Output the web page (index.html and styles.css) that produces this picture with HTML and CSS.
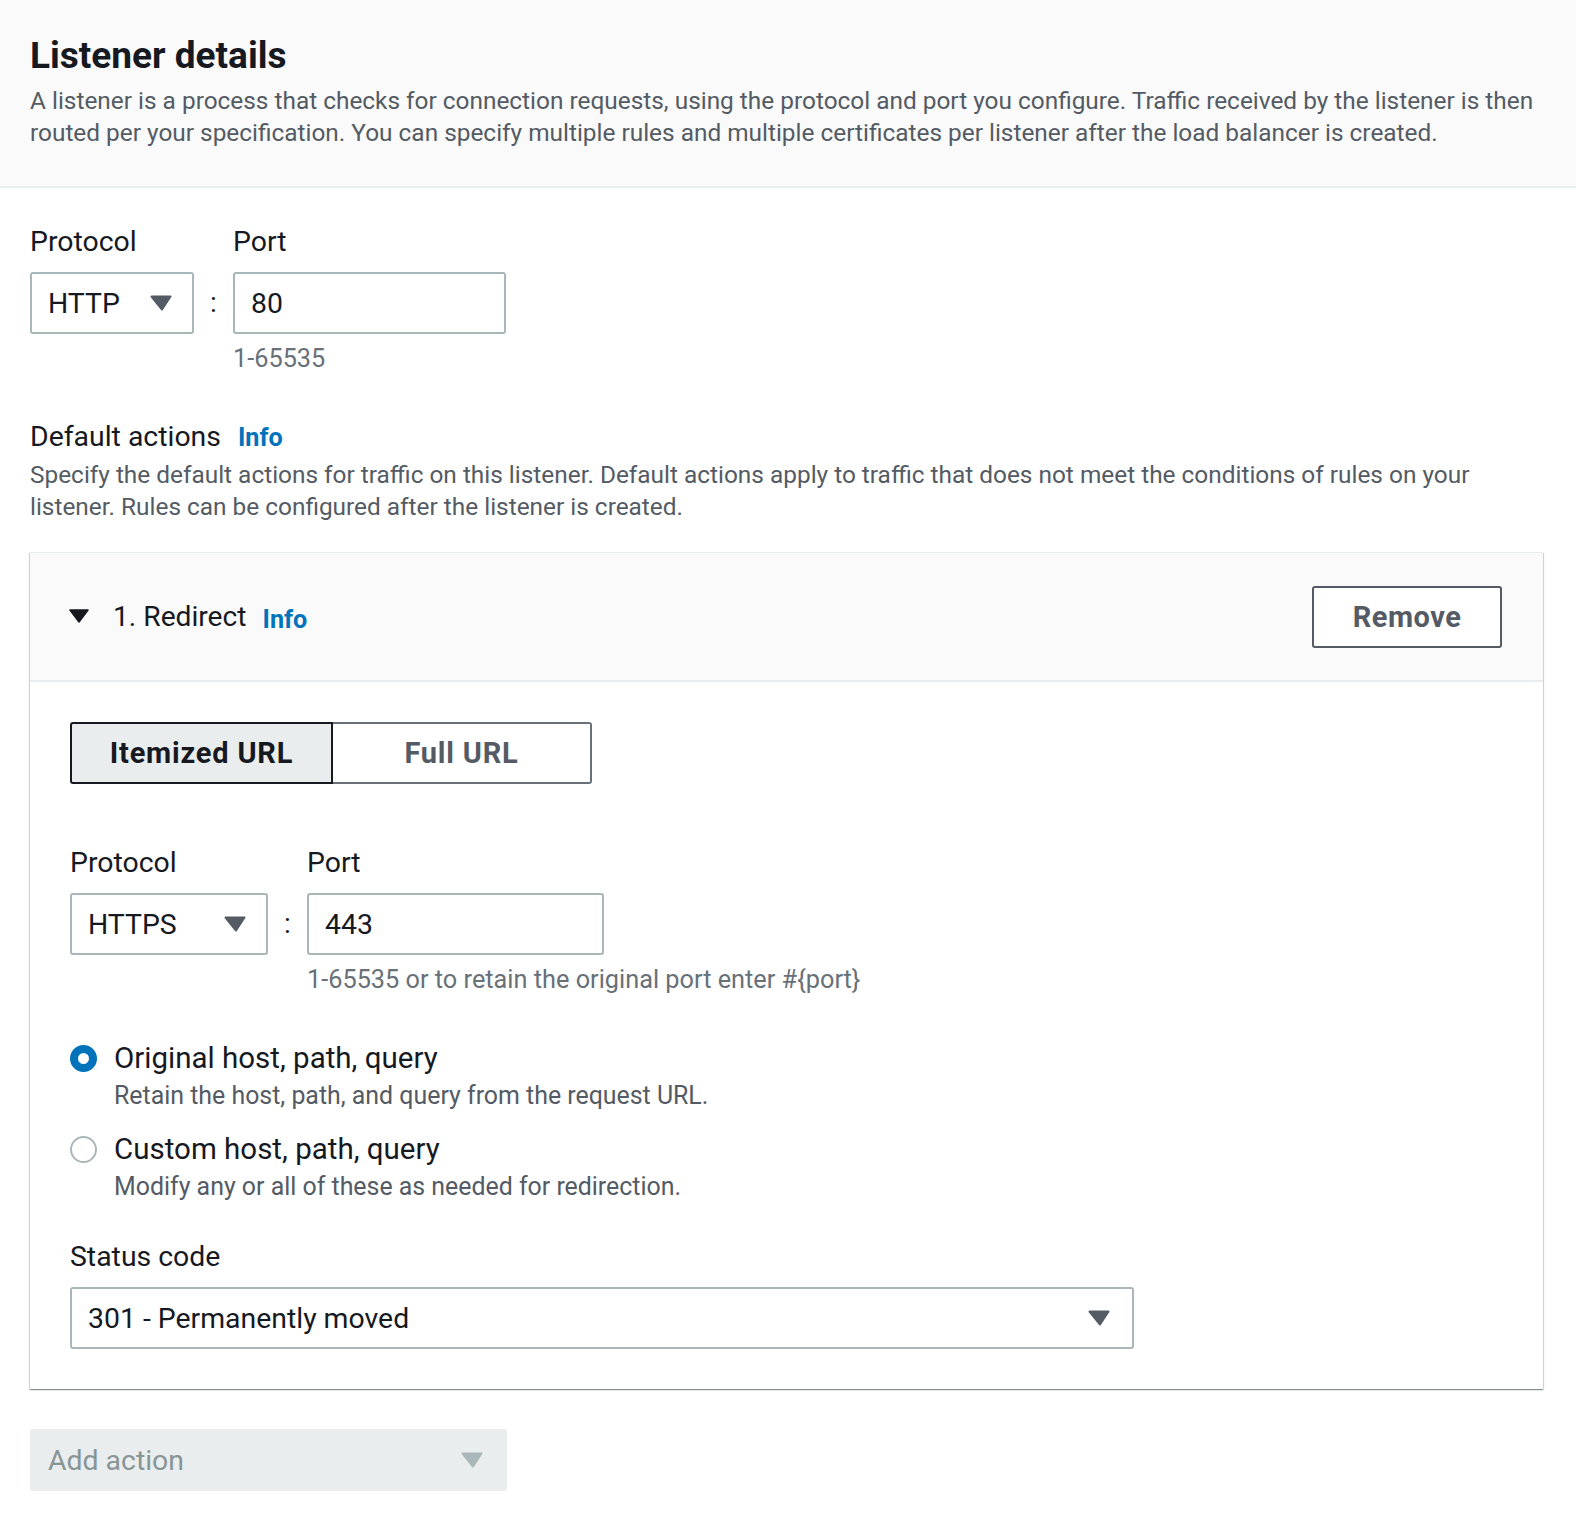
FILE: index.html
```html
<!DOCTYPE html>
<html lang="en">
<head>
<meta charset="utf-8">
<title>Listener details</title>
<link rel="stylesheet" href="styles.css">
</head>
<body>
<header class="page-header">
  <h1 class="title">Listener details</h1>
  <p class="header-desc">A listener is a process that checks for connection requests, using the protocol and port you configure. Traffic received by the listener is then routed per your specification. You can specify multiple rules and multiple certificates per listener after the load balancer is created.</p>
</header>

<main class="form">
  <div class="proto-port">
    <div class="field">
      <div class="label">Protocol</div>
      <div class="select select-http"><span class="select-text">HTTP</span><svg class="caret" viewBox="0 0 22 16"><path d="M1.5 1.5h19l-8.5 13z" fill="#545b64" stroke="#545b64" stroke-width="2" stroke-linejoin="round"/></svg></div>
    </div>
    <div class="colon">:</div>
    <div class="field">
      <div class="label">Port</div>
      <div class="input input-port">80</div>
      <div class="hint">1-65535</div>
    </div>
  </div>

  <div class="section-label">Default actions <a class="info">Info</a></div>
  <p class="section-desc">Specify the default actions for traffic on this listener. Default actions apply to traffic that does not meet the conditions of rules on your listener. Rules can be configured after the listener is created.</p>

  <section class="container">
    <div class="container-header">
      <div class="ch-title">
        <svg class="expand" viewBox="0 0 20 14"><path d="M1 1h18l-9 12z" fill="#16191f" stroke="#16191f" stroke-width="1.5" stroke-linejoin="round"/></svg>
        <span class="ch-text">1. Redirect</span>
        <a class="info info-lg">Info</a>
      </div>
      <button class="btn-remove">Remove</button>
    </div>
    <div class="container-body">
      <div class="segmented">
        <div class="seg seg-active">Itemized URL</div>
        <div class="seg seg-idle">Full URL</div>
      </div>

      <div class="proto-port proto-port-inner">
        <div class="field">
          <div class="label">Protocol</div>
          <div class="select select-https"><span class="select-text">HTTPS</span><svg class="caret" viewBox="0 0 22 16"><path d="M1.5 1.5h19l-8.5 13z" fill="#545b64" stroke="#545b64" stroke-width="2" stroke-linejoin="round"/></svg></div>
        </div>
        <div class="colon">:</div>
        <div class="field">
          <div class="label">Port</div>
          <div class="input input-port2">443</div>
          <div class="hint">1-65535 or to retain the original port enter #{port}</div>
        </div>
      </div>

      <div class="radios">
        <div class="radio">
          <span class="radio-dot checked"></span>
          <div class="radio-body">
            <div class="radio-label">Original host, path, query</div>
            <div class="radio-desc">Retain the host, path, and query from the request URL.</div>
          </div>
        </div>
        <div class="radio">
          <span class="radio-dot"></span>
          <div class="radio-body">
            <div class="radio-label">Custom host, path, query</div>
            <div class="radio-desc">Modify any or all of these as needed for redirection.</div>
          </div>
        </div>
      </div>

      <div class="label">Status code</div>
      <div class="select select-status"><span class="select-text">301 - Permanently moved</span><svg class="caret" viewBox="0 0 22 16"><path d="M1.5 1.5h19l-8.5 13z" fill="#545b64" stroke="#545b64" stroke-width="2" stroke-linejoin="round"/></svg></div>
    </div>
  </section>

  <div class="select select-disabled"><span class="select-text">Add action</span><svg class="caret" viewBox="0 0 22 16"><path d="M1.5 1.5h19l-8.5 13z" fill="#aab7b8" stroke="#aab7b8" stroke-width="2" stroke-linejoin="round"/></svg></div>
</main>
</body>
</html>
```
FILE: styles.css
```css
* { box-sizing: border-box; }

body {
  margin: 0;
  background: #ffffff;
  color: #16191f;
  font-family: Roboto, "Liberation Sans", sans-serif;
}

.page-header {
  background: #fafafa;
  border-bottom: 2px solid #eaeded;
  padding: 36px 30px 37px 30px;
}

.title {
  margin: 0;
  font-size: 37px;
  line-height: 40px;
  font-weight: 700;
  color: #16191f;
}

.header-desc {
  margin: 9px 0 0 0;
  font-size: 24.4px;
  line-height: 32px;
  color: #545b64;
}

.form {
  padding: 36px 33px 30px 30px;
}

.proto-port {
  display: flex;
  align-items: flex-start;
}

.field {
  display: flex;
  flex-direction: column;
}

.label {
  font-size: 28.4px;
  line-height: 36px;
  color: #16191f;
  margin-bottom: 12px;
}

.select {
  display: flex;
  align-items: center;
  justify-content: space-between;
  height: 62px;
  border: 2px solid #aab7b8;
  border-radius: 3px;
  background: #fff;
  padding: 0 20px 0 16px;
  font-size: 28.4px;
  color: #16191f;
}

.caret {
  width: 22px;
  height: 16px;
  flex: none;
}

.select-http { width: 164px; }
.select-https { width: 198px; }

.colon {
  font-size: 28px;
  line-height: 36px;
  margin-top: 48px;
  padding-top: 13px;
  width: 39px;
  text-align: center;
}

.input {
  height: 62px;
  border: 2px solid #aab7b8;
  border-radius: 3px;
  background: #fff;
  padding: 0 16px;
  display: flex;
  align-items: center;
  font-size: 28.4px;
  color: #16191f;
}

.input-port { width: 273px; }
.input-port2 { width: 297px; }

.hint {
  margin-top: 10px;
  font-size: 25.3px;
  line-height: 30px;
  color: #687078;
}

.section-label {
  margin-top: 45px;
  font-size: 28.4px;
  line-height: 36px;
  color: #16191f;
}

.info {
  margin-left: 10px;
  font-size: 25.2px;
  font-weight: 700;
  color: #0073bb;
  text-decoration: none;
}

.section-desc {
  margin: 3px 0 0 0;
  font-size: 24.4px;
  line-height: 32px;
  color: #545b64;
}

.container {
  margin-top: 29px;
  background: #fff;
  border-top: 1px solid #eaeded;
  box-shadow: 0 1px 1px 0 rgba(0, 28, 36, 0.3), 1px 1px 1px 0 rgba(0, 28, 36, 0.15), -1px 1px 1px 0 rgba(0, 28, 36, 0.15);
}

.container-header {
  background: #fafafa;
  border-bottom: 2px solid #eaeded;
  height: 129px;
  padding: 0 41px 0 39px;
  display: flex;
  align-items: center;
  justify-content: space-between;
}

.ch-title {
  display: flex;
  align-items: center;
}

.expand {
  width: 20px;
  height: 14px;
  margin-right: 24px;
  margin-top: -2px;
}

.ch-text {
  font-size: 28.2px;
  line-height: 36px;
  color: #16191f;
}

.info-lg {
  margin-left: 16px;
  margin-top: 6px;
}

.btn-remove {
  width: 190px;
  height: 62px;
  border: 2px solid #545b64;
  border-radius: 3px;
  background: #fff;
  font-family: inherit;
  font-size: 29px;
  letter-spacing: 0.5px;
  font-weight: 700;
  color: #545b64;
  padding: 0;
}

.container-body {
  padding: 40px 40px 40px 40px;
}

.segmented {
  display: flex;
  margin-bottom: 61px;
}

.seg {
  height: 62px;
  display: flex;
  align-items: center;
  justify-content: center;
  font-size: 29px;
  letter-spacing: 0.8px;
  font-weight: 700;
  border-radius: 3px;
}

.seg-active {
  width: 263px;
  background: #eaeded;
  border: 2px solid #16191f;
  color: #16191f;
  border-radius: 3px 0 0 3px;
}

.seg-idle {
  width: 259px;
  background: #fff;
  border: 2px solid #687078;
  border-left: none;
  color: #545b64;
  border-radius: 0 3px 3px 0;
}

.radios {
  margin-top: 45px;
  display: flex;
  flex-direction: column;
  gap: 19px;
  margin-bottom: 36px;
}

.radio {
  display: flex;
  align-items: flex-start;
}

.radio-dot {
  flex: none;
  width: 27px;
  height: 27px;
  border-radius: 50%;
  border: 2px solid #aab7b8;
  background: #fff;
  margin-top: 5px;
  margin-right: 17px;
}

.radio-dot.checked {
  border: 8px solid #0073bb;
}

.radio-label {
  font-size: 29.5px;
  line-height: 36px;
  color: #16191f;
}

.radio-desc {
  margin-top: 4px;
  font-size: 24.9px;
  line-height: 32px;
  color: #545b64;
}

.select-status {
  width: 1064px;
  padding-right: 22px;
}

.select-disabled {
  margin-top: 40px;
  width: 477px;
  background: #eaeded;
  border-color: #eaeded;
  color: #879596;
  padding-right: 22px;
}
```
